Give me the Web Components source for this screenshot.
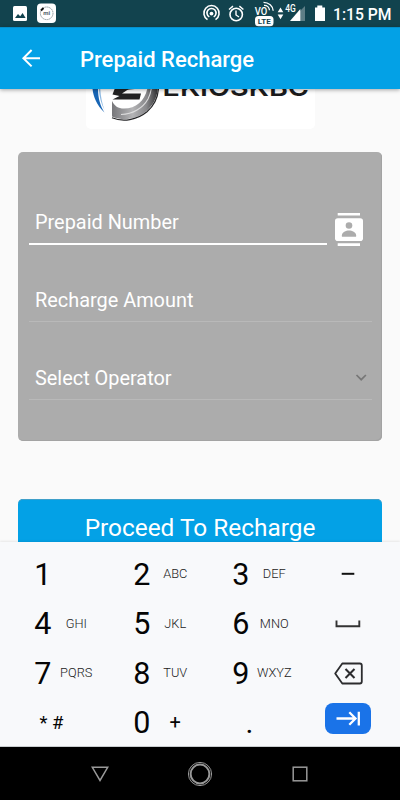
<!DOCTYPE html>
<html lang="en">
<head>
<meta charset="utf-8">
<meta name="viewport" content="width=device-width, initial-scale=1">
<title>Prepaid Recharge</title>
<style>
  body {
    margin: 0;
    background: #fafafa;
    font-family: Roboto, "Liberation Sans", sans-serif;
  }
</style>
</head>
<body>
<recharge-app></recharge-app>

<script>
class StatusBar extends HTMLElement{
    constructor(){
        super();
        this.attachShadow({mode:'open'});
    }

    connectedCallback(){
        this.shadowRoot.innerHTML = `
        <style>
          :host {
            display: flex;
            justify-content: space-between;
            height: 27px;
            background: #12434e;
            color: #fff;
          }
          svg { display: block; flex: none; }
          .clock {
            font-size: 15.7px;
            font-weight: 500;
            line-height: 29px;
            white-space: nowrap;
            width: 67px;
          }
          .right { display: flex; }
        </style>
        <svg width="70" height="27" viewBox="0 0 70 27">
          <rect x="13" y="6" width="14" height="15" rx="1.5" fill="#fff"/>
          <path d="M15 18l3-4 2.2 2.3 2.4-3.3 3 5z" fill="#12434e"/>
          <rect x="37" y="3.5" width="19" height="19.5" rx="4" fill="#fff"/>
          <circle cx="46.700" cy="13.300" r="6.300" fill="none" stroke="#8d999d" stroke-width="1" stroke-dasharray="1.500 .6"/>
          <path d="M41 10.500l2.500-2.500" stroke="#111" stroke-width="2"/>
          <text x="46.700" y="15.300" text-anchor="middle" font-size="6" font-weight="700" fill="#52616a">mi</text>
        </svg>
        <div class="right">
          <svg width="133" height="27" viewBox="200 0 133 27" fill="none" stroke="#fff">
            <path d="M207.500 19.600a7.600 7.600 0 1 1 8 0M209.300 16.900a4.500 4.500 0 1 1 4.400 0" stroke-width="1.600"/>
            <circle cx="211.500" cy="13.600" r="1.900" fill="#fff" stroke="none"/>
            <circle cx="236.200" cy="14.500" r="6.200" stroke-width="1.600"/>
            <path d="M236 10.500v4.500l3 2M229 9.500l4-3.400M243.400 9.500l-4-3.400" stroke-width="1.400"/>
            <text x="254.800" y="14.600" font-size="10.500" font-weight="500" fill="#fff" stroke="none" textLength="12.500" lengthAdjust="spacingAndGlyphs">VO</text>
            <path d="M264 5.300c3 0 5.200 2.100 5.500 5M263.500 2.300c5.200 0 9.500 3.500 9.700 8.500" stroke-width="1.300"/>
            <rect x="255" y="16" width="18.500" height="10.300" rx="3.500" fill="#fff" stroke="none"/>
            <text x="264.200" y="24.200" text-anchor="middle" font-size="8" font-weight="700" fill="#12434e" stroke="none">LTE</text>
            <path d="M277.700 12.200l2.800-4.700 2.800 4.700zM277.700 14.500l2.800 4.700 2.800-4.700z" fill="#fff" stroke="none"/>
            <path d="M300 11l5-5v15h-5z" fill="#5d7e86" stroke="none"/>
            <path d="M290 21l10.300-12V21z" fill="#fff" stroke="none"/>
            <text x="285.300" y="12" font-size="10" font-weight="500" fill="#fff" stroke="#12434e" stroke-width="1.500" paint-order="stroke" textLength="10.500" lengthAdjust="spacingAndGlyphs">4G</text>
            <path d="M315 7.500h2.300V5.500h5v2H325V21h-10z" fill="#fff" stroke="none"/>
          </svg>
          <div class="clock">1:15 PM</div>
        </div>
        `;
    }
}

class AppBar extends HTMLElement{
    constructor(){
        super();
        this.attachShadow({mode:'open'});
    }

    connectedCallback(){
        this.shadowRoot.innerHTML = `
        <style>
          :host {
            display: flex;
            align-items: center;
            height: 62px;
            padding-left: 20px;
            gap: 37px;
            box-sizing: border-box;
            background: #03a1e6;
            color: #fff;
            font-size: 22px;
            font-weight: 500;
            white-space: nowrap;
            position: relative;
            z-index: 1;
            box-shadow: 0 1px 4px rgba(0,0,0,.35), inset 0 1px 0 #0590cc;
          }
          .title { padding-top: 2px; }
        </style>
        <svg width="23" height="22" viewBox="20 47 23 22" fill="none" stroke="#fff" stroke-width="2">
          <path d="M40 58.200H23.500M31.600 50l-8.200 8.200 8.200 8.200"/>
        </svg>
        <div class="title"><slot></slot></div>
        `;
    }
}

class BrandLogo extends HTMLElement{
    constructor(){
        super();
        this.attachShadow({mode:'open'});
    }

    connectedCallback(){
        this.shadowRoot.innerHTML = `
        <style>
          :host {
            display: block;
            width: 229px;
            height: 71px;
            margin: 0 auto;
            border-radius: 5px;
            background: #fff;
          }
          svg { display: block; }
        </style>
        <svg width="229" height="71" viewBox="85 58 229 71">
          <defs>
            <linearGradient id="steel" x1="0" y1="0" x2="1" y2="0">
              <stop offset="0" stop-color="#77777a"/>
              <stop offset=".45" stop-color="#b4b4b6"/>
              <stop offset=".75" stop-color="#88888b"/>
              <stop offset="1" stop-color="#303032"/>
            </linearGradient>
          </defs>
          <path d="M92 78c-2 10 0 24 11.500 34.500C98 104 96 94 97.500 80z" fill="#1765b5"/>
          <path d="M99.500 78c-1 12 .5 22 4 32-5-9-6.500-20-5.500-32z" fill="#8db9e2"/>
          <path d="M111 101c2.500 5 6 7.500 12 7.500 15 0 25-12 24-30h9c3 14-2 25-11 33-9 7.500-22 10-34 5z" fill="url(#steel)"/>
          <path d="M111 117.800c11 4.500 25 2.300 35-6 9-8 13-20 11-33" fill="none" stroke="#252527" stroke-width="1.200"/>
          <path d="M120 114.500c12-.5 22-6.500 27-15.500 3-6 4-12 3.500-18" fill="none" stroke="#dcdcdd" stroke-width="1.100"/>
          <path d="M114 88l-2.500 6.500 7 1.500-7 3.500h27l1.500-6h-19l9-6z" fill="#222223"/>
          <path d="M118 90.500l12-4.500h9v2.500z" fill="#222223"/>
          <text x="161.500" y="95.800" font-family="Inter, sans-serif" font-size="24" font-weight="600" fill="#1b1b1c" textLength="146.500" lengthAdjust="spacingAndGlyphs">EKIOSKBC</text>
        </svg>
        `;
    }
}

class FormField extends HTMLElement{
    constructor(){
        super();
        this.attachShadow({mode:'open'});
    }

    connectedCallback(){
        this.shadowRoot.innerHTML = `
        <style>
          :host {
            display: flex;
            height: 78px;
            color: #fff;
            font-size: 19.9px;
          }
          .box {
            flex: 1;
            display: flex;
            align-items: center;
            justify-content: space-between;
            box-sizing: border-box;
            height: 46px;
            padding: 4px 5px 0 6px;
            border-bottom: 1px solid #b9b9b9;
          }
          :host([active]) .box {
            border-bottom: 2px solid #fff;
            height: 47px;
          }
          ::slotted([slot="end"]) { margin-bottom: 2px; }
        </style>
        <div class="box"><slot></slot><slot name="end"></slot></div>
        <slot name="side"></slot>
        `;
    }
}

class RechargeForm extends HTMLElement{
    constructor(){
        super();
        this.attachShadow({mode:'open'});
    }

    connectedCallback(){
        this.shadowRoot.innerHTML = `
        <style>
          :host {
            display: block;
            box-sizing: border-box;
            height: 289.5px;
            margin: 22.5px 18px 58px;
            padding: 46.5px 10px 0 11px;
            border-radius: 5px;
            background: #acacac;
            box-shadow: inset -1px -1px 0 #a3a3a3;
          }
          .contact { margin: 13px 8px 0 7px; flex: none; }
        </style>
        <form-field active>
          Prepaid Number
          <svg slot="side" class="contact" width="30" height="36" viewBox="334 211 30 36">
            <path d="M337.700 213h22.300v2.500h-22.300zM337.700 243.200h22.300v2.800h-22.300z" fill="#fff"/>
            <rect x="335" y="218.200" width="28" height="22.800" rx="2.800" fill="#fff"/>
            <circle cx="349" cy="225.500" r="3.300" fill="#acacac"/>
            <path d="M341.900 236.800v-1.500c0-3 4-4.700 7.100-4.700s7.100 1.700 7.100 4.700v1.500z" fill="#acacac"/>
          </svg>
        </form-field>
        <form-field>Recharge Amount</form-field>
        <form-field>
          Select Operator
          <svg slot="end" width="12" height="8" viewBox="0 0 12 8" fill="none" stroke="#777" stroke-width="1.700">
            <path d="M1.500 1l4.700 4.700L10.900 1"/>
          </svg>
        </form-field>
        `;
    }
}

class ActionButton extends HTMLElement{
    constructor(){
        super();
        this.attachShadow({mode:'open'});
    }

    connectedCallback(){
        this.shadowRoot.innerHTML = `
        <style>
          :host {
            display: block;
            height: 56px;
            margin: 0 18px;
            border-radius: 5px;
            background: #03a1e6;
            box-shadow: inset 0 1px 0 #3f9fc9;
            color: #fff;
            font-size: 24.4px;
            line-height: 57px;
            text-align: center;
          }
        </style>
        <slot></slot>
        `;
    }
}

class KeyCell extends HTMLElement{
    constructor(){
        super();
        this.attachShadow({mode:'open'});
    }

    connectedCallback(){
        const digit = this.getAttribute('digit');
        const hint = this.getAttribute('hint') || '';
        this.shadowRoot.innerHTML = `
        <style>
          :host {
            display: flex;
            align-items: center;
            justify-content: center;
            color: #050505;
          }
          :host([digit]) {
            justify-content: flex-start;
            padding-left: 23px;
          }
          span {
            display: flex;
            justify-content: center;
            width: 33.5px;
            white-space: nowrap;
          }
          .digit { font-size: 30.5px; }
          .hint { font-size: 12.8px; font-weight: 300; color: #222; padding-bottom: 1px; }
          :host([big]) .hint { font-size: 20px; font-weight: 400; color: #050505; }
        </style>
        ${digit ? `<span class="digit">${digit}</span><span class="hint">${hint}</span>` : '<slot></slot>'}
        `;
    }
}

class NumberPad extends HTMLElement{
    constructor(){
        super();
        this.attachShadow({mode:'open'});
    }

    connectedCallback(){
        this.shadowRoot.innerHTML = `
        <style>
          :host {
            display: grid;
            grid-template-columns: 99px 99px 99px 96px;
            grid-template-rows: repeat(4, 49.500px);
            box-sizing: border-box;
            height: 205px;
            padding: 7.5px 3px 0;
            background: #f8f9fb;
            border-bottom: 1px solid #c9cdcf;
            position: relative;
            box-shadow: 0 -1px 2px rgba(0,0,0,.08);
          }
          svg { display: block; }
          .symbols { font-size: 18.5px; padding-right: 2px; }
          .dot { font-size: 30px; padding-right: 2px; }
          .next {
            width: 46px;
            height: 31px;
            margin-bottom: 8px;
            border-radius: 8px;
            background: #1a73e8;
          }
        </style>
        <key-cell digit="1"></key-cell>
        <key-cell digit="2" hint="ABC"></key-cell>
        <key-cell digit="3" hint="DEF"></key-cell>
        <key-cell>
          <svg width="14" height="4" viewBox="0 0 14 4"><path d="M.7 .800h12.600v2H.7z" fill="#111"/></svg>
        </key-cell>
        <key-cell digit="4" hint="GHI"></key-cell>
        <key-cell digit="5" hint="JKL"></key-cell>
        <key-cell digit="6" hint="MNO"></key-cell>
        <key-cell>
          <svg width="26" height="8" viewBox="0 0 26 8"><path d="M1.500 .5v5.700h22.800V.5" fill="none" stroke="#333" stroke-width="1.900"/></svg>
        </key-cell>
        <key-cell digit="7" hint="PQRS"></key-cell>
        <key-cell digit="8" hint="TUV"></key-cell>
        <key-cell digit="9" hint="WXYZ"></key-cell>
        <key-cell>
          <svg width="29" height="23" viewBox="0 0 29 23" fill="none" stroke="#2c2c2e" stroke-width="1.800">
            <path d="M8.300 1.500h17.500a2 2 0 0 1 2 2v16a2 2 0 0 1-2 2H8.300L1.200 11.500z" stroke-linejoin="round"/>
            <path d="M11.500 7l9 9M20.500 7l-9 9" stroke-width="2.100"/>
          </svg>
        </key-cell>
        <key-cell class="symbols">* #</key-cell>
        <key-cell digit="0" hint="+" big></key-cell>
        <key-cell class="dot">.</key-cell>
        <key-cell>
          <svg class="next" viewBox="325 703 46 31" fill="none" stroke="#fff" stroke-width="2.300">
            <path d="M336.500 718.500h18.500M349.300 712.300l6.200 6.200-6.200 6.200M358.800 711.800v13.600"/>
          </svg>
        </key-cell>
        `;
    }
}

class NavBar extends HTMLElement{
    constructor(){
        super();
        this.attachShadow({mode:'open'});
    }

    connectedCallback(){
        this.shadowRoot.innerHTML = `
        <style>
          :host {
            display: grid;
            grid-template-columns: repeat(3, 100px);
            justify-content: center;
            justify-items: center;
            align-items: center;
            height: 53px;
            background: #000;
          }
        </style>
        <svg width="18" height="16" viewBox="0 0 18 16" fill="none" stroke="#999" stroke-width="1.500"><path d="M1.300 1.300h15.400L9 14.500z"/></svg>
        <svg width="26" height="26" viewBox="0 0 26 26" fill="none" stroke="#999">
          <circle cx="13" cy="13" r="11.600" stroke-width="1"/>
          <circle cx="13" cy="13" r="9.400" stroke-width="2"/>
        </svg>
        <svg width="16" height="16" viewBox="0 0 16 16" fill="none" stroke="#999" stroke-width="1.500"><rect x="1.200" y="1.200" width="13.600" height="13.600"/></svg>
        `;
    }
}

class RechargeApp extends HTMLElement{
    constructor(){
        super();
        this.attachShadow({mode:'open'});
    }

    connectedCallback(){
        this.shadowRoot.innerHTML = `
        <style>
          :host {
            display: flex;
            flex-direction: column;
            height: 800px;
            overflow: hidden;
          }
          main {
            flex: 1;
            min-height: 0;
            overflow: hidden;
            background: #fafafa;
          }
          /* page is scrolled, so the logo sits partly under the app bar */
          brand-logo { margin-top: -31px; }
        </style>
        <status-bar></status-bar>
        <app-bar>Prepaid Recharge</app-bar>
        <main>
          <brand-logo></brand-logo>
          <recharge-form></recharge-form>
          <action-button>Proceed To Recharge</action-button>
        </main>
        <number-pad></number-pad>
        <nav-bar></nav-bar>
        `;
    }
}

customElements.define('status-bar', StatusBar);
customElements.define('app-bar', AppBar);
customElements.define('brand-logo', BrandLogo);
customElements.define('form-field', FormField);
customElements.define('recharge-form', RechargeForm);
customElements.define('action-button', ActionButton);
customElements.define('key-cell', KeyCell);
customElements.define('number-pad', NumberPad);
customElements.define('nav-bar', NavBar);
customElements.define('recharge-app', RechargeApp);
</script>
</body>
</html>
